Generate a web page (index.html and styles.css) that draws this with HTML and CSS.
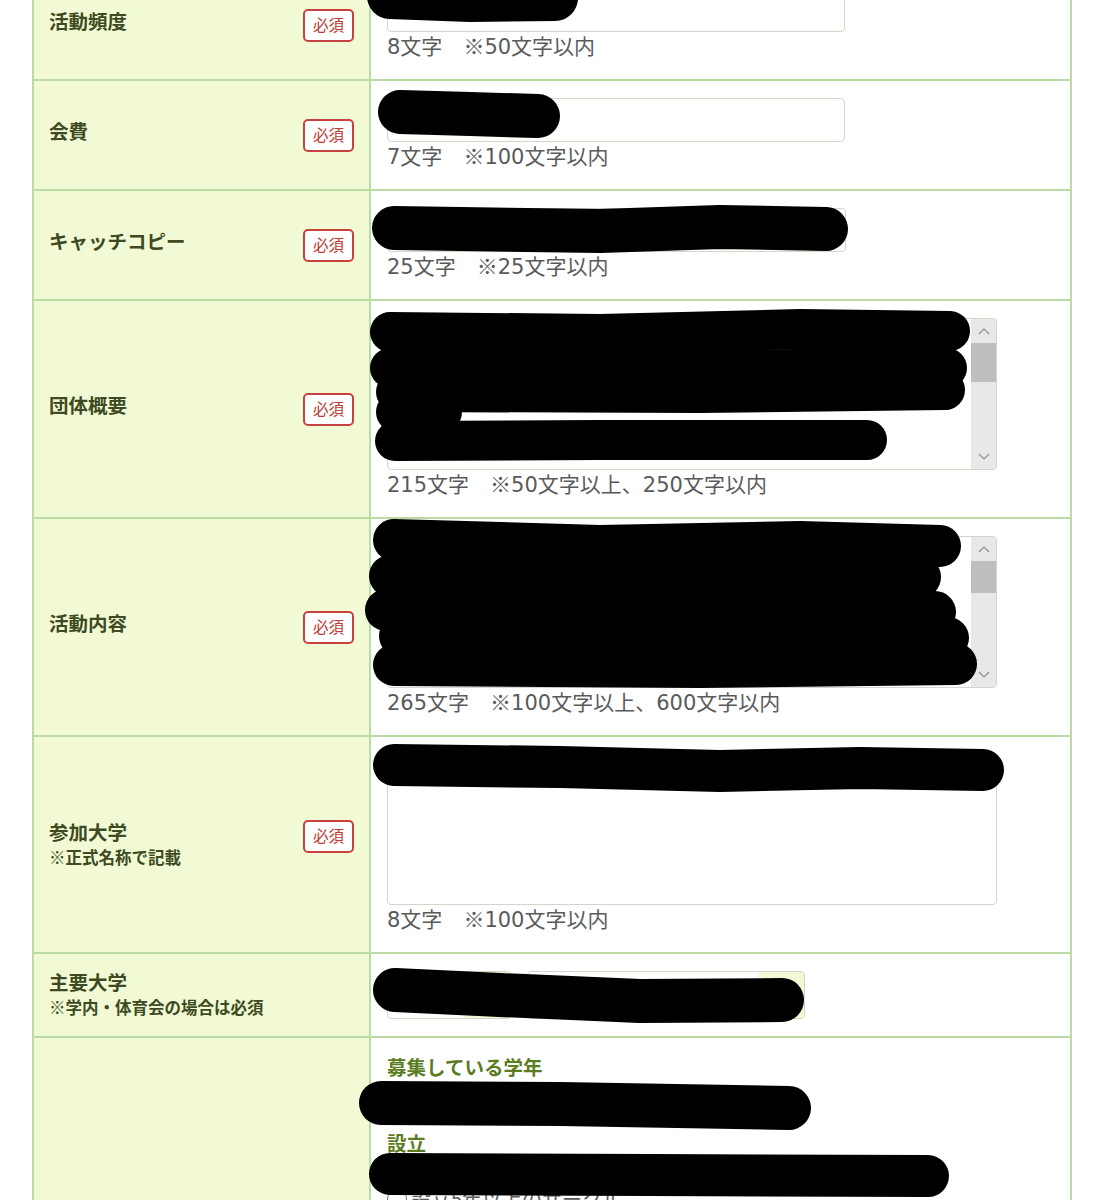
FILE: index.html
```html
<!DOCTYPE html>
<html lang="ja">
<head>
<meta charset="utf-8">
<title>団体情報</title>
<link rel="stylesheet" href="styles.css">
</head>
<body>
<div class="page">
  <div class="form">
    <div class="row">
      <div class="th"><div class="head"><span class="label">活動頻度</span><span class="req">必須</span></div></div>
      <div class="td"><div class="input"></div><p class="count">8文字　<span class="mark">※</span>50文字以内</p></div>
    </div>
    <div class="row">
      <div class="th"><div class="head"><span class="label">会費</span><span class="req">必須</span></div></div>
      <div class="td"><div class="input"></div><p class="count">7文字　<span class="mark">※</span>100文字以内</p></div>
    </div>
    <div class="row">
      <div class="th"><div class="head"><span class="label">キャッチコピー</span><span class="req">必須</span></div></div>
      <div class="td"><div class="input long"></div><p class="count">25文字　<span class="mark">※</span>25文字以内</p></div>
    </div>
    <div class="row">
      <div class="th"><div class="head"><span class="label">団体概要</span><span class="req">必須</span></div></div>
      <div class="td">
        <div class="textarea">
          <div class="scrollbar">
            <span class="arrow"><svg width="12" height="8" viewBox="0 0 12 8"><polyline points="1,7 6,2 11,7" fill="none" stroke="#8f8f8f" stroke-width="1.2"/></svg></span>
            <span class="thumb t1"></span>
            <span class="track"></span>
            <span class="arrow"><svg width="12" height="8" viewBox="0 0 12 8"><polyline points="1,1 6,6 11,1" fill="none" stroke="#8f8f8f" stroke-width="1.2"/></svg></span>
          </div>
        </div>
        <p class="count">215文字　<span class="mark">※</span>50文字以上、250文字以内</p>
      </div>
    </div>
    <div class="row">
      <div class="th"><div class="head"><span class="label">活動内容</span><span class="req">必須</span></div></div>
      <div class="td">
        <div class="textarea">
          <div class="scrollbar">
            <span class="arrow"><svg width="12" height="8" viewBox="0 0 12 8"><polyline points="1,7 6,2 11,7" fill="none" stroke="#8f8f8f" stroke-width="1.2"/></svg></span>
            <span class="thumb t2"></span>
            <span class="track"></span>
            <span class="arrow"><svg width="12" height="8" viewBox="0 0 12 8"><polyline points="1,1 6,6 11,1" fill="none" stroke="#8f8f8f" stroke-width="1.2"/></svg></span>
          </div>
        </div>
        <p class="count">265文字　<span class="mark">※</span>100文字以上、600文字以内</p>
      </div>
    </div>
    <div class="row">
      <div class="th"><div class="head"><div class="label-block"><span class="label">参加大学</span><span class="note">※正式名称で記載</span></div><span class="req">必須</span></div></div>
      <div class="td"><div class="textarea plain"></div><p class="count">8文字　<span class="mark">※</span>100文字以内</p></div>
    </div>
    <div class="row">
      <div class="th"><div class="head"><div class="label-block"><span class="label">主要大学</span><span class="note">※学内・体育会の場合は必須</span></div></div></div>
      <div class="td selects">
        <div class="select small"><span class="sel-arrow"></span></div>
        <div class="select wide"><span class="sel-arrow"></span></div>
      </div>
    </div>
    <div class="row">
      <div class="th empty"></div>
      <div class="td group">
        <h3 class="sub">募集している学年</h3>
        <div class="options"></div>
        <h3 class="sub">設立</h3>
        <div class="options short"></div>
        <label class="radio"><span class="circle"></span>設立5年以上のサークル</label>
      </div>
    </div>
  </div>

  <svg class="scribble" width="1112" height="1200" viewBox="0 0 1112 1200">
    <g fill="none" stroke="#000" stroke-linecap="round" stroke-linejoin="round">
      <polyline stroke-width="46" points="390,-4 470,-1 555,-2"/>
      <polyline stroke-width="44" points="400,112 470,114 538,116"/>
      <polyline stroke-width="44" points="394,228 600,231 720,227 826,229"/>
      <polyline stroke-width="40" points="390,332 600,334 800,329 950,331"/>
      <polyline stroke-width="40" points="390,368 650,370 947,368"/>
      <polyline stroke-width="40" points="396,392 700,393 945,390"/>
      <polyline stroke-width="40" points="396,412 442,412"/>
      <polyline stroke-width="40" points="395,441 600,440 867,440"/>
      <polyline stroke-width="42" points="394,540 600,546 800,542 940,546"/>
      <polyline stroke-width="42" points="390,576 650,579 920,577"/>
      <polyline stroke-width="42" points="386,610 650,612 935,612"/>
      <polyline stroke-width="42" points="400,636 700,634 948,638"/>
      <polyline stroke-width="42" points="394,665 700,667 956,664"/>
      <polyline stroke-width="42" points="394,765 560,767 720,771 860,768 983,770"/>
      <polyline stroke-width="44" points="395,990 500,995 640,1001 782,1000"/>
      <polyline stroke-width="44" points="381,1103 560,1104 789,1108"/>
      <polyline stroke-width="42" points="390,1174 650,1175 928,1176"/>
    </g>
  </svg>
</div>
</body>
</html>
```

FILE: styles.css
```css
* {
  box-sizing: border-box;
}

html, body {
  margin: 0;
  padding: 0;
  background: #ffffff;
}

body {
  font-family: "DejaVu Sans", "Noto Sans CJK JP", sans-serif;
  overflow: hidden;
}

.page {
  position: relative;
  width: 1112px;
  height: 1200px;
  overflow: hidden;
}

.form {
  margin: -29px 0 0 32px;
  width: 1040px;
  border-left: 2px solid #bcdba2;
  border-right: 2px solid #bcdba2;
}

.row {
  display: grid;
  grid-template-columns: 337px 1fr;
  border-bottom: 2px solid #bcdba2;
}

.th {
  background: #f1fad4;
  border-right: 2px solid #bcdba2;
  padding: 0 15px 0 15px;
  display: flex;
  align-items: center;
}

.head {
  flex: 1;
  display: flex;
  justify-content: space-between;
  align-items: flex-start;
}

.label-block {
  display: flex;
  flex-direction: column;
}

.label {
  font-family: "Noto Sans CJK JP", sans-serif;
  font-weight: 700;
  font-size: 19.5px;
  line-height: 24px;
  color: #3d4a22;
}

.note {
  font-family: "Noto Sans CJK JP", sans-serif;
  font-weight: 700;
  font-size: 16.5px;
  line-height: 26px;
  color: #3d4a22;
}

.req {
  display: flex;
  align-items: center;
  justify-content: center;
  width: 51px;
  height: 33px;
  border: 2px solid #c8413e;
  border-radius: 5px;
  background: #ffffff;
  color: #c03a36;
  font-family: "Noto Sans CJK JP", sans-serif;
  font-size: 15.5px;
  line-height: 1;
}

.td {
  padding: 17px 16px 17px 16px;
  background: #ffffff;
}

.input {
  width: 458px;
  height: 44px;
  border: 1.5px solid #d3d6c8;
  border-radius: 4px;
  background: #ffffff;
}

.input.long {
  width: 459px;
}

.count {
  margin: 0;
  height: 30px;
  font-size: 21px;
  line-height: 30px;
  color: #5a5a5a;
  white-space: nowrap;
}

.mark {
  font-family: "Noto Sans CJK JP", sans-serif;
  line-height: 1;
}

.textarea {
  width: 610px;
  height: 152px;
  border: 1.5px solid #d3d6c8;
  border-radius: 4px;
  background: #ffffff;
  display: flex;
  justify-content: flex-end;
  overflow: hidden;
}

.textarea.plain {
  height: 151px;
}

.scrollbar {
  width: 25px;
  background: #e8e8e8;
  display: flex;
  flex-direction: column;
}

.arrow {
  height: 24px;
  display: flex;
  align-items: center;
  justify-content: center;
}

.thumb {
  background: #bebebe;
  height: 39px;
}

.thumb.t2 {
  height: 32px;
}

.track {
  flex: 1;
}

.selects {
  display: flex;
  gap: 16px;
  padding-top: 17px;
  padding-bottom: 17px;
}

.select {
  height: 48px;
  border: 1.5px solid #d3d6c8;
  border-radius: 4px;
  background: #ffffff;
  display: flex;
  justify-content: flex-end;
  overflow: hidden;
}

.select.small {
  width: 124px;
}

.select.wide {
  width: 278px;
}

.sel-arrow {
  width: 45px;
  background: #f1fad4;
}

.group {
  padding-top: 14px;
}

.sub {
  margin: 0;
  font-family: "Noto Sans CJK JP", sans-serif;
  font-weight: 700;
  font-size: 19.5px;
  line-height: 30px;
  color: #5b7c1f;
}

.options {
  height: 46px;
}

.options.short {
  height: 22px;
}

.radio {
  display: flex;
  align-items: center;
  gap: 4px;
  margin-top: 4px;
  font-family: "Noto Sans CJK JP", sans-serif;
  font-size: 20px;
  line-height: 30px;
  color: #5a5a5a;
}

.circle {
  width: 20px;
  height: 20px;
  border: 1.5px solid #777;
  border-radius: 50%;
  background: #fff;
}

.scribble {
  position: absolute;
  left: 0;
  top: 0;
  pointer-events: none;
}
```
